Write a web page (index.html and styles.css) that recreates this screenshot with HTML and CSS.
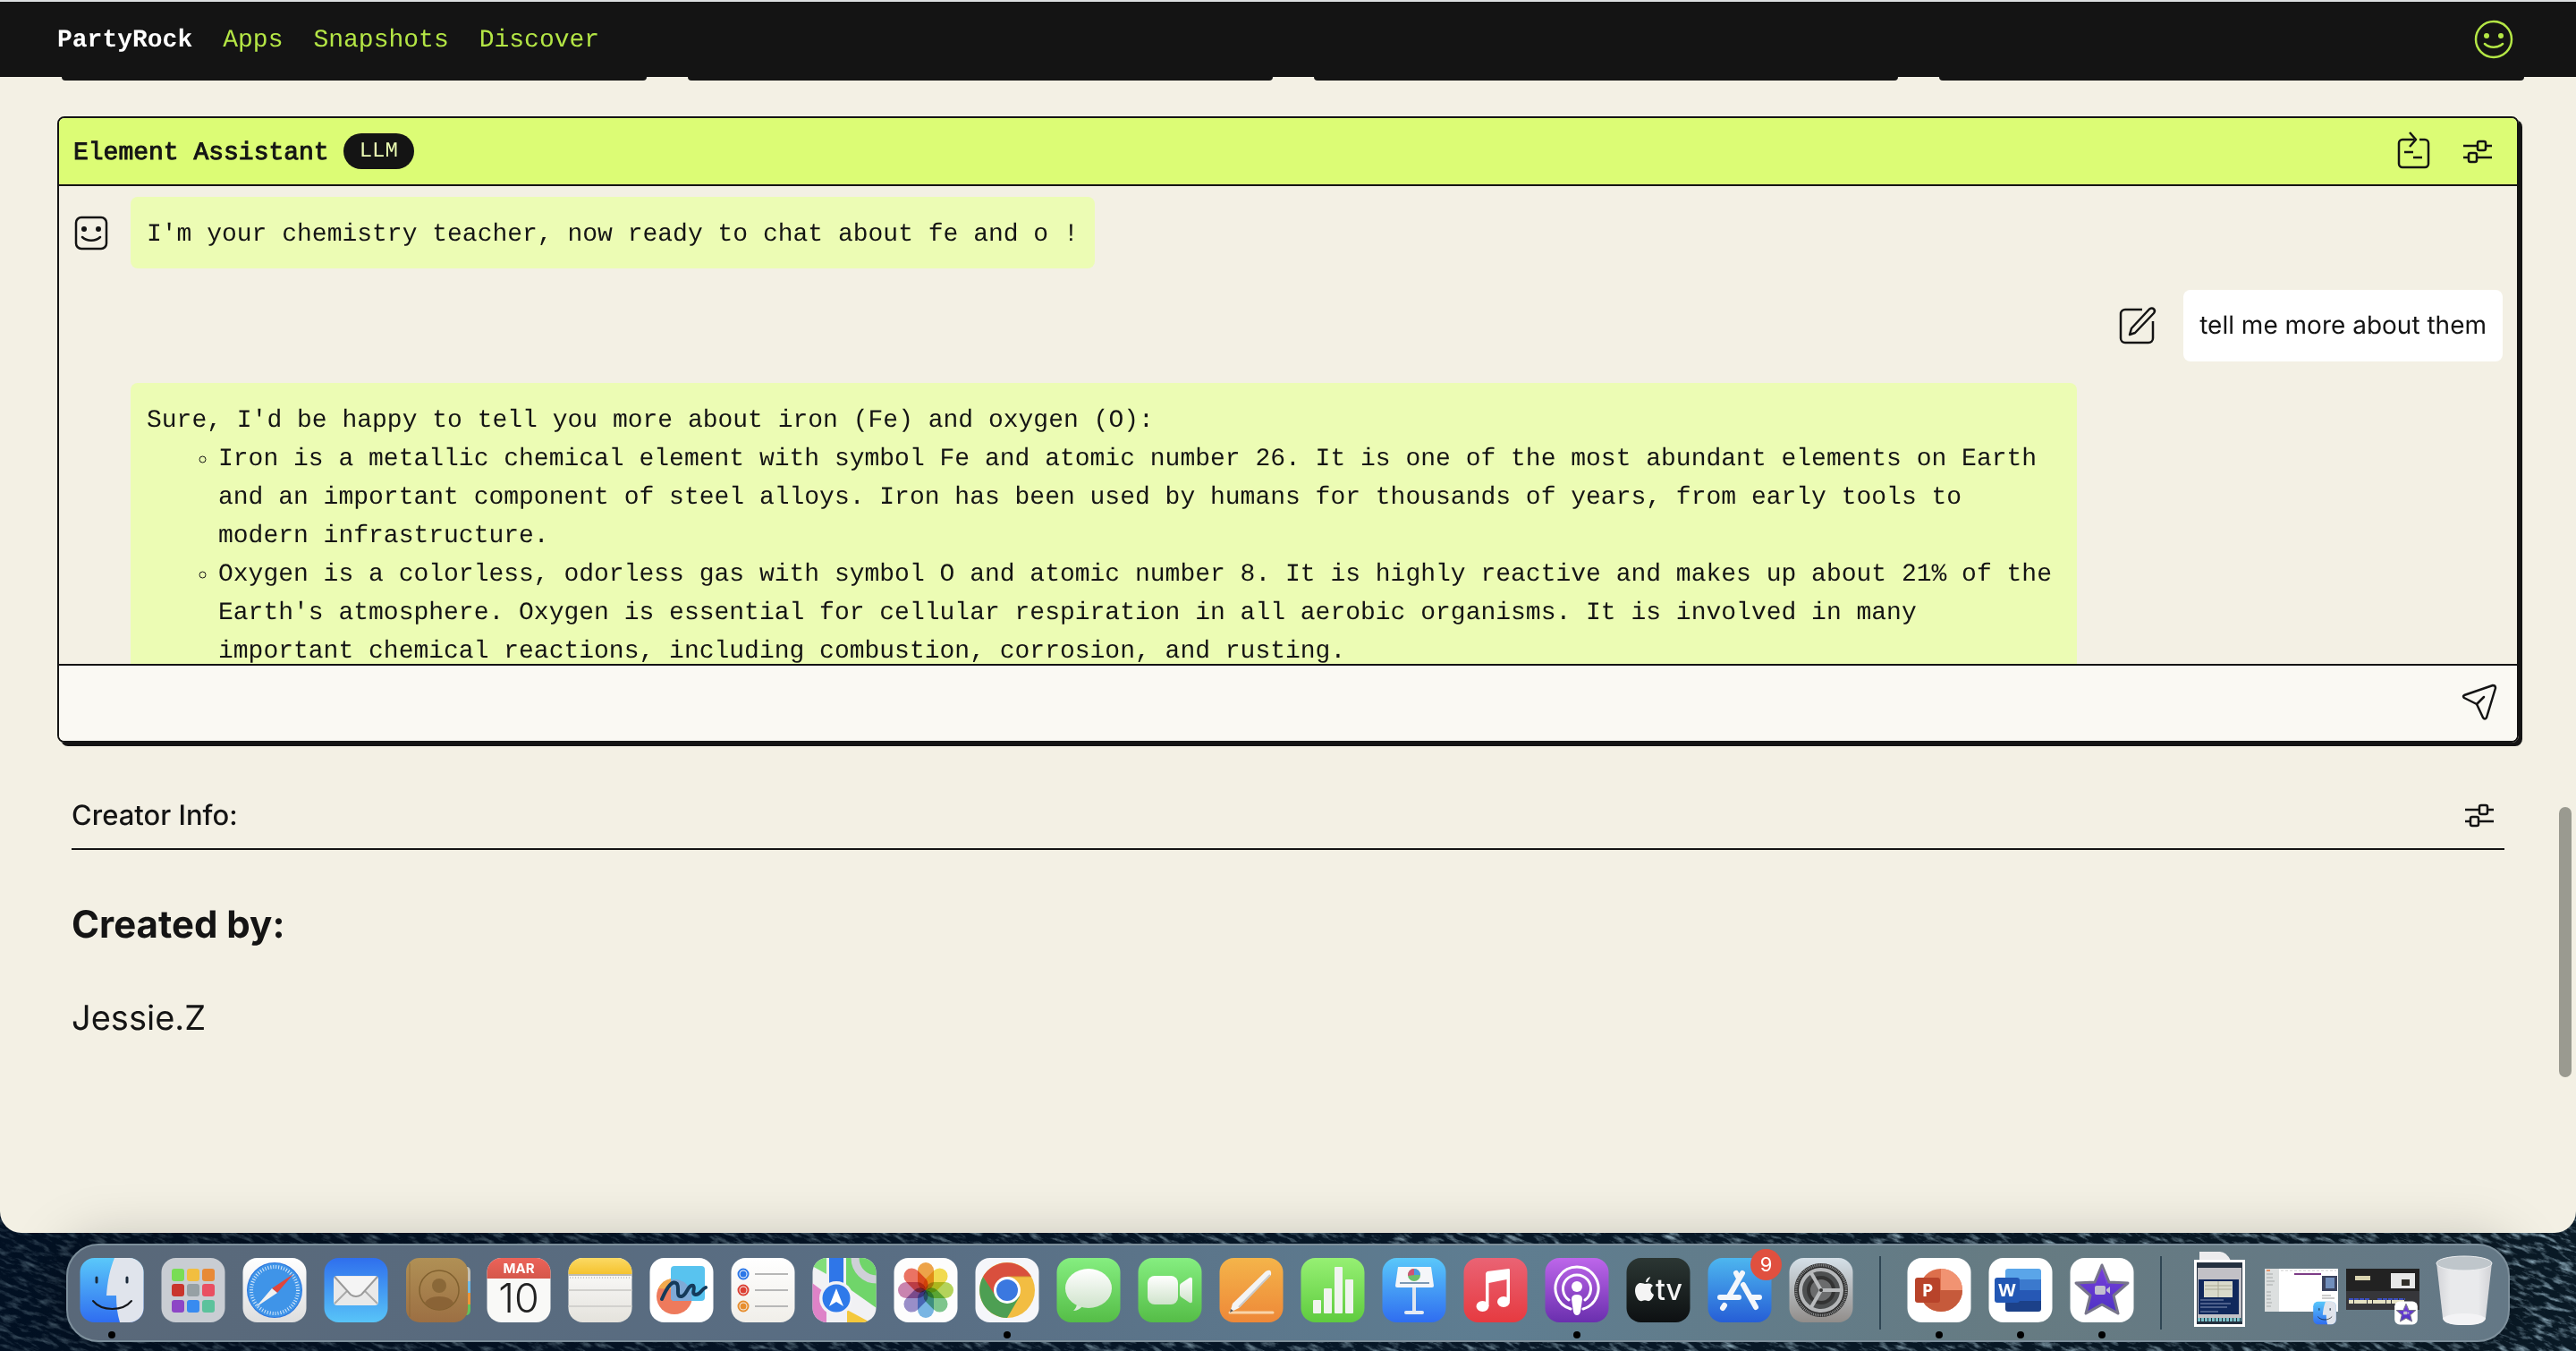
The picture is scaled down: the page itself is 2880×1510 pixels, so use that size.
FILE: index.html
```html
<!DOCTYPE html>
<html lang="en">
<head>
<meta charset="utf-8">
<title>PartyRock</title>
<link rel="stylesheet" href="styles.css">
</head>
<body>
<svg class="wallpaper" aria-hidden="true" preserveAspectRatio="none">
  <defs>
    <linearGradient id="sea"><stop offset="0" stop-color="#06152a"/><stop offset=".45" stop-color="#081b2e"/><stop offset="1" stop-color="#0a1a26"/></linearGradient>
    <linearGradient id="lit"><stop offset="0" stop-color="#000e1e" stop-opacity=".6"/><stop offset=".6" stop-color="#000e1e" stop-opacity="0"/></linearGradient>
    <filter id="waves" x="0" y="0" width="100%" height="100%">
      <feTurbulence type="fractalNoise" baseFrequency="0.06 0.2" numOctaves="5" seed="7"/>
      <feColorMatrix values="0 0 0 0 .34  0 0 0 0 .5  0 0 0 0 .6  2.4 0 0 0 -1.15"/>
    </filter>
  </defs>
  <rect width="100%" height="100%" fill="url(#sea)"/>
  <g transform="rotate(20)"><rect x="-100" y="-1300" width="3200" height="1500" filter="url(#waves)"/></g>
  <rect width="100%" height="100%" fill="url(#lit)"/>
</svg>

<svg class="symbols" aria-hidden="true">
  <defs>
    <linearGradient id="g-blue" x2="0" y2="1"><stop offset="0" stop-color="#5ac8fa"/><stop offset="1" stop-color="#2f6df0"/></linearGradient>
    <linearGradient id="g-mail" x2="0" y2="1"><stop offset="0" stop-color="#2f6fed"/><stop offset="1" stop-color="#58c4f8"/></linearGradient>
    <linearGradient id="g-green" x2="0" y2="1"><stop offset="0" stop-color="#85ee80"/><stop offset="1" stop-color="#55bd47"/></linearGradient>
    <linearGradient id="g-lime" x2="0" y2="1"><stop offset="0" stop-color="#96f073"/><stop offset="1" stop-color="#5fcb3f"/></linearGradient>
    <linearGradient id="g-orange" x2="0" y2="1"><stop offset="0" stop-color="#f4b44a"/><stop offset="1" stop-color="#ee8838"/></linearGradient>
    <linearGradient id="g-red" x2="0" y2="1"><stop offset="0" stop-color="#ea6374"/><stop offset="1" stop-color="#e63a40"/></linearGradient>
    <linearGradient id="g-purple" x2="0" y2="1"><stop offset="0" stop-color="#bd66ea"/><stop offset="1" stop-color="#6a2fae"/></linearGradient>
    <linearGradient id="g-black" x2="0" y2="1"><stop offset="0" stop-color="#2b3633"/><stop offset="1" stop-color="#0d1012"/></linearGradient>
    <linearGradient id="g-store" x2="0" y2="1"><stop offset="0" stop-color="#4db6ef"/><stop offset="1" stop-color="#265ed6"/></linearGradient>
    <linearGradient id="g-grey" x2="0" y2="1"><stop offset="0" stop-color="#d5e0e8"/><stop offset="1" stop-color="#918d8a"/></linearGradient>
    <linearGradient id="g-white" x2="0" y2="1"><stop offset="0" stop-color="#ffffff"/><stop offset="1" stop-color="#dedede"/></linearGradient>
    <linearGradient id="g-paper" x2="0" y2="1"><stop offset="0" stop-color="#ffffff"/><stop offset="1" stop-color="#f0eee9"/></linearGradient>
    <linearGradient id="g-note" x2="0" y2="1"><stop offset="0" stop-color="#ffffff"/><stop offset="1" stop-color="#e4e2dc"/></linearGradient>
    <linearGradient id="g-brown" x2="0" y2="1"><stop offset="0" stop-color="#b09055"/><stop offset="1" stop-color="#9c6f43"/></linearGradient>
    <linearGradient id="g-yellow" x2="0" y2="1"><stop offset="0" stop-color="#fbd964"/><stop offset="1" stop-color="#f5c32f"/></linearGradient>
    <linearGradient id="g-cal" x2="0" y2="1"><stop offset="0" stop-color="#ec6359"/><stop offset="1" stop-color="#d5574b"/></linearGradient>
    <linearGradient id="g-star" x2="0" y2="1"><stop offset="0" stop-color="#7a3fdc"/><stop offset="1" stop-color="#4d32c4"/></linearGradient>
    <linearGradient id="g-bubble" x2="0" y2="1"><stop offset="0" stop-color="#ffffff"/><stop offset="1" stop-color="#cfe3cb"/></linearGradient>
    <linearGradient id="g-bin" x2="1" y2="0"><stop offset="0" stop-color="#d3d4d8"/><stop offset=".25" stop-color="#e9eaec"/><stop offset=".75" stop-color="#e9eaec"/><stop offset="1" stop-color="#d0d1d5"/></linearGradient>
    <clipPath id="tile"><rect x=".5" y="0" width="71" height="72" rx="16"/></clipPath>
    <symbol id="finder" viewBox="0 0 72 72">
      <g clip-path="url(#tile)">
        <rect width="72" height="72" fill="url(#g-blue)"/>
        <path d="M39 0C34 12 31 26 30 42H41C41 53 42 62 45 72H72V0Z" fill="#e0e4ec"/>
      </g>
      <path d="M19 22v5M53 22v5" stroke="#1b2a3a" stroke-width="3" stroke-linecap="round"/>
      <path d="M15 48C25 60 48 60 58 48" fill="none" stroke="#15171c" stroke-width="2" stroke-linecap="round"/>
    </symbol>
    <symbol id="imovie" viewBox="0 0 72 72">
      <rect x=".5" width="71" height="72" rx="16" fill="#fff"/>
      <path d="M36 8l8 19 21 1-16 14 5 20-18-10-18 10 5-20L7 28l21-1z" fill="url(#g-star)" stroke="#77758a" stroke-width="3" stroke-linejoin="round"/>
      <path d="M36 11l6 18" stroke="#9a70ea" opacity=".4"/>
      <rect x="28" y="31" width="12" height="10" rx="2" fill="#c2bfcf"/><path d="M41 35l4-3v8l-4-3z" fill="#c2bfcf"/>
    </symbol>
    <symbol id="sliders" viewBox="0 0 48 48">
      <g fill="none" stroke="currentColor" stroke-width="2.500">
        <path d="M8 18H23M33 18H40M8 31H13M23 31H40"/>
        <rect x="24" y="13" width="9" height="10" rx="2"/><rect x="14" y="26" width="9" height="10" rx="2"/>
      </g>
    </symbol>
  </defs>
</svg>

<main class="window">
  <header class="topbar">
    <nav class="topnav">
      <a class="brand" href="#">PartyRock</a>
      <a href="#">Apps</a>
      <a href="#">Snapshots</a>
      <a href="#">Discover</a>
    </nav>
    <button class="icon-button profile" aria-label="Profile">
      <svg viewBox="0 0 48 48"><circle cx="24" cy="24" r="20" fill="none" stroke="currentColor" stroke-width="2.500"/><ellipse cx="16" cy="20" rx="3" ry="3" fill="currentColor"/><ellipse cx="32" cy="20" rx="3" ry="3" fill="currentColor"/><path d="M14 29C19 34 29 34 34 29" fill="none" stroke="currentColor" stroke-width="2.500" stroke-linecap="round"/></svg>
    </button>
  </header>

  <div class="card-edges" aria-hidden="true"><i></i><i></i><i></i><i></i></div>

  <section class="widget">
    <header class="widget-head">
      <h2>Element Assistant</h2>
      <span class="badge">LLM</span>
      <button class="icon-button push" aria-label="Copy to app">
        <svg viewBox="0 0 48 48"><g fill="none" stroke="currentColor" stroke-width="2.500"><path d="M25 11H12a4 4 0 0 0-4 4V38a4 4 0 0 0 4 4H37a4 4 0 0 0 4-4V15a4 4 0 0 0-4-4H31"/><path d="M20 3l7 8-7 8" stroke-linejoin="round"/><path d="M14 25h10M24 31h10"/></g></svg>
      </button>
      <button class="icon-button" aria-label="Edit widget"><svg><use href="#sliders"/></svg></button>
    </header>
    <div class="chat">
      <div class="message">
        <svg class="icon" viewBox="0 0 48 48" aria-hidden="true"><rect x="7" y="7" width="34" height="35" rx="6" fill="none" stroke="currentColor" stroke-width="2.500"/><circle cx="16" cy="20" r="3" fill="currentColor"/><circle cx="32" cy="20" r="3" fill="currentColor"/><path d="M14 29C19 34 29 34 34 29" fill="none" stroke="currentColor" stroke-width="2.500" stroke-linecap="round"/></svg>
        <div class="bubble">I'm your chemistry teacher, now ready to chat about fe and o !</div>
      </div>
      <div class="message user">
        <button class="icon-button" aria-label="Edit message">
          <svg viewBox="0 0 48 48"><g fill="none" stroke="currentColor" stroke-width="2.500" stroke-linejoin="round"><path d="M30 6H11a5 5 0 0 0-5 5V38a5 5 0 0 0 5 5H37a5 5 0 0 0 5-5V19"/><path d="M16 34l2-7L38 5.500q3-2 5 0t0 4.500L22 32z"/></g></svg>
        </button>
        <div class="bubble">tell me more about them</div>
      </div>
      <div class="message">
        <span class="icon"></span>
        <div class="bubble">
          <p>Sure, I'd be happy to tell you more about iron (Fe) and oxygen (O):</p>
          <ul>
            <li>Iron is a metallic chemical element with symbol Fe and atomic number 26. It is one of the most abundant elements on Earth and an important component of steel alloys. Iron has been used by humans for thousands of years, from early tools to modern infrastructure.</li>
            <li>Oxygen is a colorless, odorless gas with symbol O and atomic number 8. It is highly reactive and makes up about 21% of the Earth's atmosphere. Oxygen is essential for cellular respiration in all aerobic organisms. It is involved in many important chemical reactions, including combustion, corrosion, and rusting.</li>
          </ul>
        </div>
      </div>
    </div>
    <form class="composer">
      <input type="text" aria-label="Message">
      <button type="button" class="icon-button" aria-label="Send">
        <svg viewBox="0 0 48 48"><g fill="none" stroke="currentColor" stroke-width="2.500" stroke-linejoin="round" stroke-linecap="round"><path d="M7 17L39 6q3 0 3 3L32 42q-2 3-4 0L21 27 7 20q-2-2 0-3z"/><path d="M21 27l8-8"/></g></svg>
      </button>
    </form>
  </section>

  <section class="creator">
    <header class="creator-head">
      <h2>Creator Info:</h2>
      <button class="icon-button" aria-label="Edit creator info"><svg><use href="#sliders"/></svg></button>
    </header>
    <h1>Created by:</h1>
    <p>Jessie.Z</p>
  </section>
  <div class="scroll-thumb"></div>
</main>

<footer class="dock-area">
  <div class="dock">
    <button class="app running" aria-label="Finder"><svg><use href="#finder"/></svg></button>
    <button class="app" aria-label="Launchpad"><svg viewBox="0 0 72 72"><rect x=".5" width="71" height="72" rx="16" fill="#c9cdd3"/>
      <rect x="12" y="12" width="14" height="14" rx="3" fill="#79dd55"/><rect x="29" y="12" width="14" height="14" rx="3" fill="#f2be3f"/><rect x="46" y="12" width="14" height="14" rx="3" fill="#e88a37"/>
      <rect x="12" y="29" width="14" height="14" rx="3" fill="#c9352c"/><rect x="29" y="29" width="14" height="14" rx="3" fill="#96a0a4"/><rect x="46" y="29" width="14" height="14" rx="3" fill="#e94f62"/>
      <rect x="12" y="47" width="14" height="14" rx="3" fill="#8d46c6"/><rect x="29" y="47" width="14" height="14" rx="3" fill="#388bf0"/><rect x="46" y="47" width="14" height="14" rx="3" fill="#5cc29c"/></svg></button>
    <button class="app" aria-label="Safari"><svg viewBox="0 0 72 72"><rect x=".5" width="71" height="72" rx="16" fill="url(#g-white)"/><circle cx="36" cy="36" r="31" fill="#2b74de"/><circle cx="36" cy="36" r="30" fill="#3f94e8"/><circle cx="36" cy="36" r="26" fill="none" stroke="#fff" stroke-opacity=".8" stroke-width="4" stroke-dasharray="1 2"/><path d="M57 18L33 34l6 5z" fill="#e0453c"/><path d="M15 55L33 34l6 5z" fill="#f1f1f1"/></svg></button>
    <button class="app" aria-label="Mail"><svg viewBox="0 0 72 72"><rect x=".5" width="71" height="72" rx="16" fill="url(#g-mail)"/><rect x="11" y="20" width="50" height="33" rx="4" fill="#e9e9e9"/><path d="M12 51l17-17M60 51L43 34" stroke="#aaa" stroke-width="2"/><path d="M12 21L30 41q6 4 12 0L60 21" fill="#f4f4f4" stroke="#999" stroke-width="2"/></svg></button>
    <button class="app" aria-label="Contacts"><svg viewBox="0 0 72 72"><path d="M66 10h4q3 1 3 6v10h-7z" fill="#c4c0b4"/><path d="M66 26h7v13h-7z" fill="#6fbbe8"/><path d="M66 39h7v13h-7z" fill="#ef9536"/><path d="M66 52h7v6q0 5-4 6h-3z" fill="#62c25a"/><rect x="1" width="69" height="72" rx="15" fill="url(#g-brown)"/><path d="M5 6V66" stroke="#81602f" opacity=".6"/><circle cx="38" cy="36" r="22" fill="none" stroke="#80602f" stroke-width="1.500"/><circle cx="38" cy="31" r="8" fill="#8a6838"/><path d="M22 50q4-7 16-7t16 7q-6 8-16 8t-16-8z" fill="#8a6336"/></svg></button>
    <button class="app" aria-label="Calendar"><svg viewBox="0 0 72 72"><g clip-path="url(#tile)"><rect width="72" height="72" fill="#f9f9f7"/><rect width="72" height="23" fill="url(#g-cal)"/></g><text class="cal-month" x="36" y="17">MAR</text><text class="cal-day" x="36" y="61">10</text></svg></button>
    <button class="app" aria-label="Notes"><svg viewBox="0 0 72 72"><g clip-path="url(#tile)"><rect width="72" height="72" fill="url(#g-note)"/><rect width="72" height="18" fill="url(#g-yellow)"/><path d="M0 19H72" stroke="#bdbbb2" stroke-width="2"/><path d="M2 22H72" stroke="#ccc" stroke-width="2" stroke-dasharray="1 2"/><path d="M0 36H72M0 54H72" stroke="#d2d1ce" stroke-width="2"/></g></svg></button>
    <button class="app" aria-label="Freeform"><svg viewBox="0 0 72 72"><rect x=".5" width="71" height="72" rx="16" fill="#fff"/><circle cx="28" cy="43" r="20" fill="#ee7a5c"/><path d="M10 34a20 20 0 0 1 14-11v12z" fill="#f3aa4d"/><rect x="24" y="9" width="38" height="39" rx="4" fill="#58c3ef"/><path d="M24 24a20 20 0 0 1 23 24H28q-4 0-4-4z" fill="#7fa9d6"/><path d="M14 46C20 32 26 24 31 29C34 34 29 44 36 43C42 42 43 29 49 31C52 34 46 40 52 41C57 41 58 35 63 33" fill="none" stroke="#153a5a" stroke-width="4" stroke-linecap="round"/></svg></button>
    <button class="app" aria-label="Reminders"><svg viewBox="0 0 72 72"><rect x=".5" width="71" height="72" rx="16" fill="url(#g-paper)"/><g fill="none" stroke-width="2"><circle cx="14" cy="18" r="5.500" stroke="#2b77e8"/><circle cx="14" cy="36" r="5.500" stroke="#dc4034"/><circle cx="14" cy="54" r="5.500" stroke="#e78e2f"/><path d="M27 18H64M27 36H64M27 54H64" stroke="#b7b7b7"/></g><circle cx="14" cy="18" r="3.500" fill="#2b77e8"/><circle cx="14" cy="36" r="3.500" fill="#dc4034"/><circle cx="14" cy="54" r="3.500" fill="#e78e2f"/></svg></button>
    <button class="app" aria-label="Maps"><svg viewBox="0 0 72 72"><g clip-path="url(#tile)"><rect width="72" height="72" fill="#f1f1f4"/><path d="M0 0H16V18L0 9z" fill="#82de79"/><path d="M38 0H72V56L38 32z" fill="#70d56a"/><path d="M0 28l16 12V72H0z" fill="#de83c8"/><path d="M39 58l26 14H39z" fill="#f4c83c"/><rect x="19" width="16" height="40" fill="#2f76e8"/><circle cx="72" cy="0" r="24" fill="none" stroke="#cfd0d8" stroke-width="9"/></g><circle cx="27" cy="45" r="19" fill="#f2f2f6"/><circle cx="27" cy="45" r="15.500" fill="#2e79ea"/><path d="M27 34l8 20-8-5-8 5z" fill="#fff"/></svg></button>
    <button class="app" aria-label="Photos"><svg viewBox="0 0 72 72"><rect x=".5" width="71" height="72" rx="16" fill="#fdfdfd"/><g class="petals"><rect x="27" y="5" width="18" height="31" rx="9" fill="#ee9a35"/><rect x="27" y="5" width="18" height="31" rx="9" fill="#f2d93c" transform="rotate(45 36 36)"/><rect x="27" y="5" width="18" height="31" rx="9" fill="#aed14a" transform="rotate(90 36 36)"/><rect x="27" y="5" width="18" height="31" rx="9" fill="#71c182" transform="rotate(135 36 36)"/><rect x="27" y="5" width="18" height="31" rx="9" fill="#6bafe2" transform="rotate(180 36 36)"/><rect x="27" y="5" width="18" height="31" rx="9" fill="#8f83c4" transform="rotate(225 36 36)"/><rect x="27" y="5" width="18" height="31" rx="9" fill="#c678a9" transform="rotate(270 36 36)"/><rect x="27" y="5" width="18" height="31" rx="9" fill="#ea6553" transform="rotate(315 36 36)"/></g></svg></button>
    <button class="app running" aria-label="Chrome"><svg viewBox="0 0 72 72"><rect x=".5" width="71" height="72" rx="16" fill="#f5f6fa"/><circle cx="36" cy="36" r="31" fill="#f2bd42"/><path d="M9 21A31 31 0 0 1 63 21H36L22 44z" fill="#d94f3d"/><path d="M9 21A31 31 0 0 0 36 67L50 43 24 44z" fill="#4d9f53"/><path d="M36 21H63" stroke="#d7a236"/><circle cx="36" cy="36" r="15" fill="#fff"/><circle cx="36" cy="36" r="12" fill="#3b78e0"/></svg></button>
    <button class="app" aria-label="Messages"><svg viewBox="0 0 72 72"><rect x=".5" width="71" height="72" rx="16" fill="url(#g-green)"/><path d="M23 50q0 6-4 9 6 0 11-6z" fill="#dceada"/><ellipse cx="36" cy="34" rx="26" ry="22" fill="url(#g-bubble)"/></svg></button>
    <button class="app" aria-label="FaceTime"><svg viewBox="0 0 72 72"><rect x=".5" width="71" height="72" rx="16" fill="url(#g-green)"/><rect x="11" y="20" width="34" height="32" rx="8" fill="url(#g-bubble)"/><path d="M47 31q0-2 2-3l9-6q3-1 3 2V48q0 3-3 2l-9-6q-2-1-2-3z" fill="url(#g-bubble)"/></svg></button>
    <button class="app" aria-label="Pages"><svg viewBox="0 0 72 72"><rect x=".5" width="71" height="72" rx="16" fill="url(#g-orange)"/><path d="M12 61H60" stroke="#f9d5a9" stroke-width="3" stroke-linecap="round"/><path d="M12 61l3-10L52 15q7-4 6 4L22 56z" fill="#f4f4f4"/><path d="M22 55L57 19" stroke="#c9c9c9" stroke-width="2"/><path d="M12 61l1-4 3 2z" fill="#555"/></svg></button>
    <button class="app" aria-label="Numbers"><svg viewBox="0 0 72 72"><rect x=".5" width="71" height="72" rx="16" fill="url(#g-lime)"/><g fill="#f0f4ef"><rect x="14" y="47" width="9" height="15" rx="1"/><rect x="26" y="34" width="9" height="28" rx="1"/><rect x="38" y="10" width="9" height="52" rx="1"/><rect x="50" y="24" width="9" height="38" rx="1"/></g></svg></button>
    <button class="app" aria-label="Keynote"><svg viewBox="0 0 72 72"><rect x=".5" width="71" height="72" rx="16" fill="url(#g-blue)"/><path d="M34 33h4V60H34z" fill="#dfe6ef"/><rect x="25" y="59" width="22" height="4" rx="2" fill="#e5ebf4"/><path d="M18 10H55l3 21q0 2-2 2H17q-2 0-2-2z" fill="#f5f6f9"/><path d="M20 28H53" stroke="#7d99b5" stroke-width="2"/><circle cx="36" cy="19" r="7" fill="#6cbf6a"/><path d="M36 19V12a7 7 0 0 1 7 7z" fill="#4a9be0"/><path d="M36 19V12a7 7 0 0 0-7 8z" fill="#cf5374"/></svg></button>
    <button class="app" aria-label="Music"><svg viewBox="0 0 72 72"><rect x=".5" width="71" height="72" rx="16" fill="url(#g-red)"/><g fill="#fff"><path d="M25 18q0-2 2-3L51 12q1 0 1 2V48H48.500V24L28.500 28V54H25z"/><ellipse cx="21.500" cy="54" rx="7" ry="6"/><ellipse cx="45" cy="49" rx="7" ry="6"/></g></svg></button>
    <button class="app running" aria-label="Podcasts"><svg viewBox="0 0 72 72"><rect x=".5" width="71" height="72" rx="16" fill="url(#g-purple)"/><g fill="none" stroke="#fff" stroke-width="3" stroke-linecap="round"><path d="M29 57A24 24 0 1 1 43 57"/><path d="M27 47A15.500 15.500 0 1 1 45 47"/></g><circle cx="36" cy="32" r="6" fill="#fff"/><path d="M30 46q0-5 6-5t6 5l-2 14q-1 4-4 4t-4-4z" fill="#fff"/></svg></button>
    <button class="app" aria-label="TV"><svg viewBox="0 0 72 72"><rect x=".5" width="71" height="72" rx="16" fill="url(#g-black)"/><path d="M24 27c1-3 3-4 3-6-3 1-5 3-5 6zM21 29c-2-1-4-1-6-1-5 2-6 8-4 14 2 5 4 7 7 6 2-1 4-1 6 0 3 1 6-3 7-7-5-3-4-8-1-10-2-3-5-3-9-2z" fill="#f4f4f4"/><text class="tv-word" x="33" y="47">tv</text></svg></button>
    <button class="app" aria-label="App Store, 9 updates"><svg viewBox="0 0 72 72"><rect x=".5" width="71" height="72" rx="16" fill="url(#g-store)"/><g stroke="#f4f7fb" stroke-width="6" stroke-linecap="round"><path d="M14 44H35M49 44H58M39 17L24 43M19 53L17 56M40 30L54 55M32 17l2 4"/></g></svg><span class="count">9</span></button>
    <button class="app" aria-label="System Settings"><svg viewBox="0 0 72 72"><rect x=".5" width="71" height="72" rx="16" fill="url(#g-grey)"/><circle cx="36" cy="36" r="30" fill="#2c2c2c"/><circle cx="36" cy="36" r="28" fill="none" stroke="#8d8f90" stroke-width="3" stroke-dasharray="1 1"/><circle cx="36" cy="36" r="23" fill="#4d4f50" stroke="#b4b6b8" stroke-width="4"/><circle cx="36" cy="36" r="14" fill="#6b6c6d" stroke="#333" stroke-width="4"/><path d="M36 36H58M36 36L25 17M36 36L25 55" stroke="#b9bbbd" stroke-width="4"/><circle cx="36" cy="36" r="2" fill="#333"/></svg></button>
    <span class="divider"></span>
    <button class="app running" aria-label="PowerPoint"><svg viewBox="0 0 72 72"><rect x=".5" width="71" height="72" rx="16" fill="#fff"/><circle cx="38" cy="36" r="24" fill="#dd6f4c"/><path d="M38 12a24 24 0 0 1 24 24H38z" fill="#f19372"/><path d="M14 36a24 24 0 0 0 48 0z" fill="#c65a3b"/><rect x="9" y="22" width="28" height="28" rx="3" fill="#b8432a"/><text class="office" x="23" y="43">P</text></svg></button>
    <button class="app running" aria-label="Word"><svg viewBox="0 0 72 72"><rect x=".5" width="71" height="72" rx="16" fill="#fff"/><path d="M19 24V15q0-3 3-3H56q3 0 3 3v9z" fill="#5aa5e9"/><path d="M19 24H59V36H19z" fill="#3b79cd"/><path d="M19 36H59V48H19z" fill="#2658b5"/><path d="M19 48H59v9q0 3-3 3H22q-3 0-3-3z" fill="#1c4189"/><rect x="7" y="22" width="28" height="28" rx="3" fill="#2257b4"/><text class="office" x="21" y="43">W</text></svg></button>
    <button class="app running" aria-label="iMovie"><svg><use href="#imovie"/></svg></button>
    <span class="divider"></span>
    <button class="app tall" aria-label="Downloads"><svg viewBox="0 0 72 90"><path d="M13 2H36q7 0 12 10H13z" fill="#ececee"/><rect x="7" y="11" width="57" height="75" fill="#fff"/><rect x="10" y="14" width="51" height="69" fill="#24303f"/><rect x="11" y="20" width="49" height="56" fill="#c2c1c6"/><rect x="12" y="33" width="45" height="39" fill="#10285c"/><rect x="18" y="35" width="32" height="18" fill="#d9dacb"/><path d="M19 40H49M19 44H49M34 35V53" stroke="#aaa995"/><path d="M14 56H40M14 60H48M14 64H44M14 69H34" stroke="#8795b8"/><path d="M11 78H60" stroke="#7bc1c9" stroke-width="4" stroke-dasharray="3 1"/></svg></button>
    <button class="app minimized" aria-label="Finder window"><svg viewBox="0 0 82 72"><rect y="12" width="82" height="48" fill="#fff"/><rect y="12" width="16" height="48" fill="#dcdfdf"/><path d="M2 14h4" stroke="#e8946a" stroke-width="2"/><path d="M18 14H80" stroke="#ccc" stroke-dasharray="3 2"/><rect x="33" y="17" width="30" height="2" fill="#7d3c86"/><path d="M2 18h7M2 22h7M2 26h9M2 30h7M2 38h5M2 42h5M2 46h5M2 50h6M2 54h5" stroke="#a5a9a9"/><rect x="64" y="20" width="17" height="17" fill="#3b435e"/><rect x="68" y="22" width="10" height="12" fill="#718fbc"/><path d="M64 42h10M64 45h14" stroke="#999"/><use href="#finder" x="54" y="48" width="26" height="27"/></svg></button>
    <button class="app minimized" aria-label="iMovie window"><svg viewBox="0 0 82 72"><rect y="12" width="82" height="46" fill="#222"/><rect y="37" width="82" height="21" fill="#36363a"/><rect x="10" y="20" width="17" height="5" fill="#d9d3b0"/><rect x="50" y="17" width="27" height="17" fill="#e7e8e8"/><rect x="62" y="24" width="9" height="7" fill="#32302a"/><path d="M3 46H26M35 46H66" stroke="#3d4fc0" stroke-width="2" stroke-dasharray="5 1"/><path d="M3 49H66" stroke="#e6e2c4" stroke-width="4" stroke-dasharray="5 1 14 1"/><use href="#imovie" x="54" y="48" width="26" height="27"/></svg></button>
    <button class="app tall" aria-label="Trash"><svg viewBox="0 0 72 90"><path d="M5 14L12 76q1 8 24 8t24-8L67 14z" fill="url(#g-bin)"/><path d="M12 76q1 8 24 8t24-8q-8-5-24-5t-24 5z" fill="#f3f3f5"/><ellipse cx="36" cy="15" rx="31" ry="8" fill="#bfc6cb" stroke="#eceef0"/></svg></button>
  </div>
</footer>
</body>
</html>
```
FILE: styles.css
```css
* { box-sizing: border-box; }

:root {
  --ink: #141414;
  --page: #f3f0e4;
  --lime: #dcfc75;
  --lime-soft: #ecfcb4;
  --mono: "Liberation Mono", monospace;
  --sans: "Inter", sans-serif;
}

body {
  margin: 0;
  min-height: 100vh;
  display: flex;
  flex-direction: column;
  background: #06152a;
  color: var(--ink);
  font-family: var(--sans);
  font-size: 28px;
  line-height: 43px;
  text-rendering: geometricPrecision;
}

h1, h2, p, ul { margin: 0; }
button { border: 0; padding: 0; background: none; color: inherit; font: inherit; }

.symbols { position: absolute; width: 0; height: 0; }
.wallpaper { position: absolute; bottom: 0; left: 0; width: 100%; height: 180px; }

/* Browser window */
.window {
  position: relative;
  flex: 1;
  border-top: 2px solid #dcdfe0;
  border-radius: 0 0 24px 24px;
  background: var(--page);
  overflow: hidden;
}

.topbar {
  display: flex;
  align-items: center;
  justify-content: space-between;
  height: 84px;
  padding: 0 68px 0 64px;
  background: var(--ink);
  color: #b4e645;
}
.topnav { display: flex; gap: 34px; padding-top: 2px; font-family: var(--mono); }
.topnav a { color: inherit; text-decoration: none; }
.topnav .brand { color: #fff; font-weight: 700; }

.icon, .icon-button { flex: none; display: block; width: 48px; height: 48px; }
.icon-button svg { display: block; width: 100%; height: 100%; }

.card-edges { display: flex; gap: 46px; padding: 0 58px 0 69px; }
.card-edges i { flex: 1; height: 4px; border-radius: 0 0 6px 6px; background: var(--ink); }

/* Chat widget */
.widget {
  margin: 40px 64px 0;
  border: 2px solid var(--ink);
  border-radius: 8px;
  box-shadow: 4px 4px 0 var(--ink);
  overflow: hidden;
}
.widget-head {
  display: flex;
  align-items: center;
  gap: 16px;
  height: 76px;
  padding: 0 20px 0 16px;
  border-bottom: 2px solid var(--ink);
  background: var(--lime);
}
.widget-head h2 {
  padding-top: 4px;
  font-family: var(--mono);
  font-size: 28px;
  font-weight: 400;
  -webkit-text-stroke: 1px var(--ink);
}
.badge {
  padding: 2px 18px 0;
  border-radius: 20px;
  background: var(--ink);
  color: var(--lime-soft);
  font-family: var(--mono);
  font-size: 24px;
  line-height: 38px;
}
.push { margin-left: auto; margin-right: 8px; }

.chat {
  display: flex;
  flex-direction: column;
  gap: 24px;
  height: 534px;
  padding: 12px 16px 0 12px;
  overflow-y: auto;
  scrollbar-width: none;
}
.message { display: flex; align-items: flex-start; gap: 20px; }
.message > .icon, .message > .icon-button { margin-top: 16px; }
.message.user { justify-content: flex-end; gap: 28px; }
.bubble {
  max-width: 80%;
  padding: 21px 18px 16px;
  border-radius: 8px;
  background: var(--lime-soft);
  font-family: var(--mono);
}
.user .bubble { padding: 18px 18px 19px; background: #fff; font-family: var(--sans); }
.bubble ul { padding-left: 80px; list-style: circle; }

.composer {
  display: flex;
  align-items: center;
  height: 86px;
  padding: 0 18px 4px 0;
  border-top: 2px solid var(--ink);
  background: #faf9f3;
}
.composer input {
  flex: 1;
  height: 100%;
  padding: 0 16px;
  border: 0;
  outline: 0;
  background: none;
  font: inherit;
}

/* Creator section */
.creator { padding: 48px 80px 0; }
.creator-head {
  display: flex;
  align-items: center;
  justify-content: space-between;
  height: 72px;
  padding: 0 4px 4px 0;
  border-bottom: 2px solid var(--ink);
}
.creator-head h2 { font-size: 31px; font-weight: 500; }
.creator h1 { margin-top: 56px; font-size: 42px; line-height: 56px; }
.creator p { margin-top: 48px; font-size: 38px; line-height: 56px; }

.scroll-thumb {
  position: absolute;
  top: 900px;
  right: 5px;
  width: 14px;
  height: 302px;
  border-radius: 7px;
  background: #9a9a90;
}

/* Dock */
.dock-area { position: relative; display: flex; justify-content: center; padding: 12px 0 10px; }
.dock {
  display: flex;
  gap: 19px;
  height: 110px;
  padding: 14px 13px;
  border: 2px solid #7d8f9b;
  border-radius: 36px;
  background: linear-gradient(90deg, #596879, #596e84 35%, #5e7d91 58%, #667b82 80%, #647886);
  box-shadow: 0 0 64px rgba(0, 0, 0, .25);
}
.app { position: relative; display: flex; align-items: flex-start; flex: none; width: 72px; height: 92px; }
.app > svg { display: block; flex: none; width: 72px; height: 72px; overflow: visible; }
.tall > svg { height: 90px; margin-top: -9px; }
.minimized > svg { width: 82px; margin-left: -5px; }
.running::after {
  content: "";
  position: absolute;
  left: 32px;
  bottom: 2px;
  width: 8px;
  height: 8px;
  border-radius: 4px;
  background: #000;
}
.divider { flex: none; width: 2px; height: 82px; margin: -2px 10px 0; background: #2f4654; }
.count {
  position: absolute;
  top: -10px;
  right: -11px;
  width: 35px;
  height: 35px;
  border-radius: 18px;
  background: #e0503f;
  color: #fff;
  font-size: 22px;
  line-height: 35px;
  text-align: center;
}
.petals rect { mix-blend-mode: multiply; opacity: .9; }
.cal-month { fill: #fff; font: 700 15px var(--sans); text-anchor: middle; }
.cal-day { fill: #222; font: 300 45px var(--sans); text-anchor: middle; }
.tv-word { fill: #f4f4f4; font: 500 32px var(--sans); }
.office { fill: #fff; font: 700 20px "Open Sans", sans-serif; text-anchor: middle; }
```
